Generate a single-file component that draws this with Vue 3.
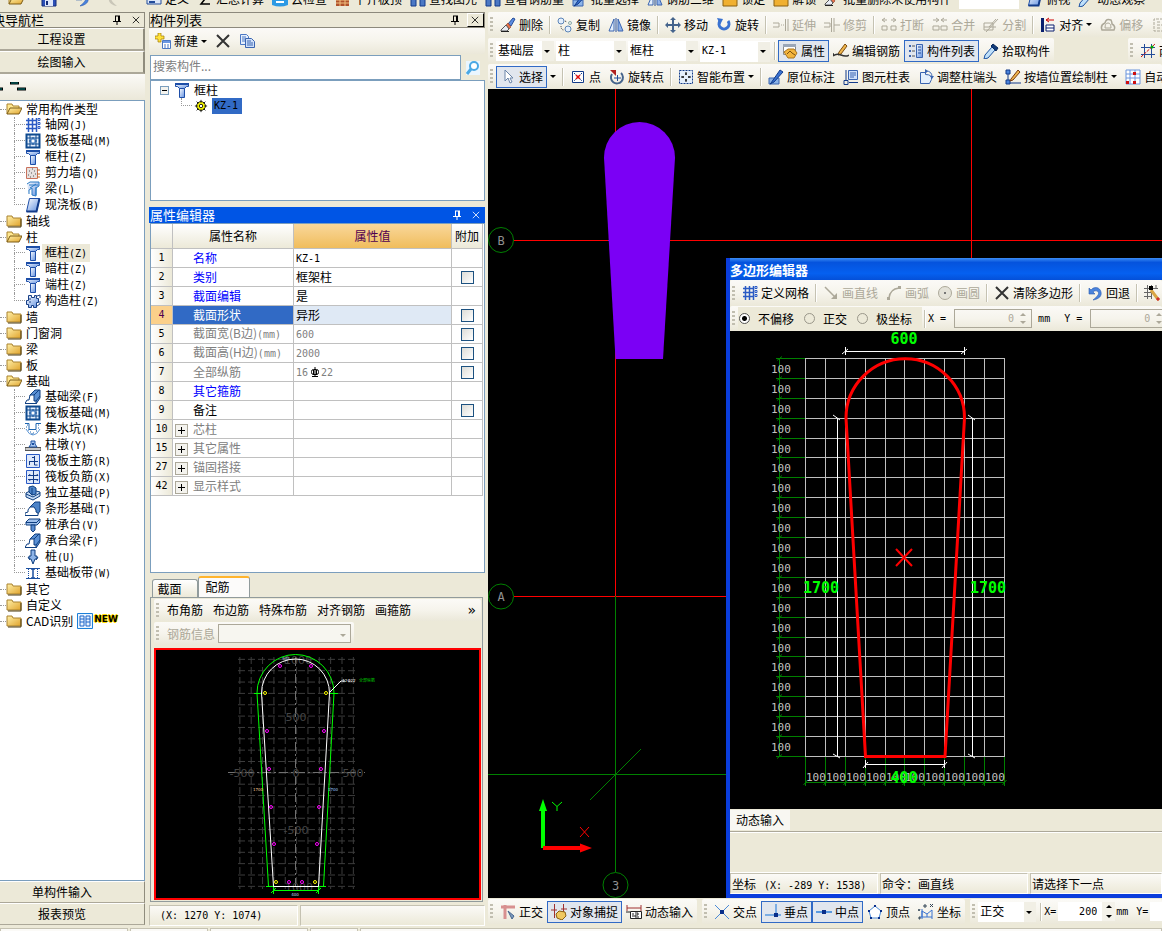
<template>
    <div class="app">
        <svg class="defs" aria-hidden="true">
            <defs>
                <linearGradient id="g-blue" x1="0" x2="1" y1="0" y2="1">
                    <stop offset="0" stop-color="#ffffff" />
                    <stop offset="1" stop-color="#5f8fe0" />
                </linearGradient>
                <linearGradient id="g-gold" x1="0" x2="1" y1="0" y2="1">
                    <stop offset="0" stop-color="#fff0a8" />
                    <stop offset="1" stop-color="#e0a32c" />
                </linearGradient>
            </defs>
        </svg>

        <div class="top-strip">
            <div class="top-file">
                <button v-for="i in fileTools" :key="i" class="tool" :aria-label="i">
                    <svg class="ic" viewBox="0 0 16 16" v-html="icons[i]"></svg>
                </button>
            </div>
            <div class="top-main">
                <button v-for="t in topTools" :key="t.text" class="tool">
                    <svg class="ic" viewBox="0 0 16 16" v-html="icons[t.icon]"></svg>
                    <span>{{ t.text }}</span>
                </button>
                <select class="top-select" aria-label="楼层"></select>
                <button v-for="t in viewTools" :key="t.text" class="tool">
                    <svg class="ic" viewBox="0 0 16 16" v-html="icons[t.icon]"></svg>
                    <span>{{ t.text }}</span>
                </button>
            </div>
        </div>

        <div class="body">
            <nav class="nav">
                <div class="pane-title nav-title">
                    <span class="cut">块导航栏</span>
                    <svg class="pin" viewBox="0 0 10 10"><path :d="pinPath" /></svg>
                    <svg class="close" viewBox="0 0 10 10"><path d="M1 1L9 9M9 1L1 9" /></svg>
                </div>
                <button class="nav-btn">工程设置</button>
                <button class="nav-btn">绘图输入</button>
                <div class="nav-tools">
                    <svg width="26" height="10" viewBox="0 0 26 10">
                        <path d="M0 7h3M10 1h9M17 7h9" stroke="#000" stroke-width="3" />
                        <path d="M0 7h2M11 1h7M18 7h7" stroke="#008080" stroke-width="1" />
                    </svg>
                </div>
                <ul class="tree">
                    <template v-for="group in tree" :key="group.text">
                        <li class="node">
                            <span class="stub"></span>
                            <svg class="ic" viewBox="0 0 16 16" v-html="group.items ? icons.open : icons.folder"></svg>
                            <span class="node-text">{{ group.text }}</span>
                            <template v-if="group.isNew">
                                <svg class="ic" viewBox="0 0 16 16" v-html="icons.cad"></svg>
                                <b class="new">NEW</b>
                            </template>
                        </li>
                        <li
                            v-for="(item, n) in group.items"
                            :key="item[0]"
                            class="node child"
                            :class="{ last: n === group.items.length - 1, active: group.active === n }"
                        >
                            <span class="branch"></span>
                            <svg class="ic" viewBox="0 0 16 16" v-html="icons[item[2]]"></svg>
                            <span class="node-text">{{ item[0] }}<span class="mono">({{ item[1] }})</span></span>
                        </li>
                    </template>
                </ul>
                <button class="nav-btn low">单构件输入</button>
                <button class="nav-btn low">报表预览</button>
            </nav>

            <section class="middle">
                <div class="pane-title">
                    <span>构件列表</span>
                    <svg class="pin" viewBox="0 0 10 10"><path :d="pinPath" /></svg>
                    <button class="close-btn" aria-label="关闭">
                        <svg class="close" viewBox="0 0 10 10"><path d="M1 1L9 9M9 1L1 9" /></svg>
                    </button>
                </div>
                <div class="bar list-bar">
                    <button class="tool">
                        <svg class="ic" viewBox="0 0 16 16" v-html="icons.add"></svg>
                        <span>新建</span><i class="caret"></i>
                    </button>
                    <button class="tool" aria-label="删除"><svg class="ic" viewBox="0 0 16 16" v-html="icons.cross"></svg></button>
                    <button class="tool" aria-label="复制"><svg class="ic" viewBox="0 0 16 16" v-html="icons.pages"></svg></button>
                </div>
                <div class="search">
                    <input v-model="keyword" type="text" placeholder="搜索构件..." aria-label="搜索构件" />
                    <button aria-label="搜索"><svg class="ic" viewBox="0 0 16 16" v-html="icons.search"></svg></button>
                </div>
                <div class="parts">
                    <div class="part">
                        <svg class="minus" viewBox="0 0 9 9">
                            <rect x="0.5" y="0.5" width="8" height="8" fill="#f4f3ee" stroke="#7b9ebd" />
                            <path d="M2 4.500h5" stroke="#000" />
                        </svg>
                        <svg class="ic" viewBox="0 0 16 16" v-html="icons.column"></svg>
                        <span>框柱</span>
                    </div>
                    <div class="part sub">
                        <span class="branch"></span>
                        <svg class="ic gear" viewBox="0 0 16 16" v-html="icons.gear"></svg>
                        <span class="picked mono">KZ-1</span>
                    </div>
                </div>

                <div class="pane-title blue">
                    <span>属性编辑器</span>
                    <svg class="pin" viewBox="0 0 10 10"><path :d="pinPath" /></svg>
                    <svg class="close" viewBox="0 0 10 10"><path d="M1 1L9 9M9 1L1 9" /></svg>
                </div>
                <div class="props">
                    <table>
                        <thead>
                            <tr>
                                <th class="c-no"></th>
                                <th class="c-name">属性名称</th>
                                <th class="c-value hot">属性值</th>
                                <th class="c-add">附加</th>
                            </tr>
                        </thead>
                        <tbody>
                            <tr v-for="row in rows" :key="row.no" :class="{ current: row.no === 4 }">
                                <th class="no">{{ row.no }}</th>
                                <td class="name" :class="row.tone">
                                    <span v-if="row.group" class="plus"></span>
                                    <span class="label">{{ row.name }}<span v-if="row.unit" class="mono">{{ row.unit }}</span></span>
                                </td>
                                <td class="value" :class="{ grey: row.tone === 'grey' }">
                                    <template v-if="row.no === 7">
                                        <span class="mono">16</span>
                                        <svg class="rebar" viewBox="0 0 10 10">
                                            <path d="M5 0v10M2 9.500h6M3.500 3v5M6.500 3v5" /><rect x="1.500" y="2.500" width="7" height="5" rx="2" />
                                        </svg>
                                        <span class="mono">22</span>
                                    </template>
                                    <span v-else :class="{ mono: /^[\w-]+$/.test(row.value) }">{{ row.value }}</span>
                                </td>
                                <td class="add"><input v-if="row.check" type="checkbox" :aria-label="row.name" /></td>
                            </tr>
                        </tbody>
                    </table>
                </div>

                <div class="tabs">
                    <button class="tab">截面</button>
                    <button class="tab on">配筋</button>
                </div>
                <div class="tab-panel">
                    <div class="bar rebar-bar">
                        <i class="grip"></i>
                        <button v-for="t in rebarTools" :key="t" class="text-tool">{{ t }}</button>
                        <span class="more">»</span>
                    </div>
                    <div class="bar rebar-info">
                        <i class="grip"></i>
                        <label for="rebar">钢筋信息</label>
                        <span class="combo off"><select id="rebar" disabled></select></span>
                    </div>
                    <div class="preview">
                        <svg width="323" height="247" viewBox="156 650 323 247">
                            <g class="dash">
                                <path v-for="n in 11" :key="'v' + n" :d="`M${228.500 + n * 11.350} 657V889`" />
                                <path v-for="n in 21" :key="'h' + n" :d="`M238 ${648 + n * 11.350}H355`" />
                            </g>
                            <path class="axis" d="M295.500 657V889M228 772.500H365" />
                            <g class="scale">
                                <text x="298" y="664">1000</text>
                                <text x="296" y="721">500</text>
                                <text x="242" y="777">-500</text>
                                <text x="296" y="777">0</text>
                                <text x="353" y="777">500</text>
                                <text x="296" y="834">-500</text>
                                <text x="299" y="891">1000</text>
                            </g>
                            <path
                                class="cover"
                                d="M257 693A38.500 38.500 0 0 1 334 693L323.500 886.500M257 693L268.500 886.500M273.500 890.500H318.500M254 693.500H261M329 693.500H338M266 886.500H276M316 886.500H326M273.500 884V894M318.500 884V894M271 893L276 888M316 893L321 888"
                            />
                            <path class="outline" d="M261.500 693A34 34 0 0 1 329.500 693L318.500 886.500H273.500ZM330 692L341 681H345" />
                            <circle v-for="(d, n) in dots" :key="n" :cx="d[0]" :cy="d[1]" r="1.500" fill="none" :stroke="d[2] ? '#ff0' : '#f0f'" />
                            <g class="tiny">
                                <text x="286" y="660" fill="#cde">942</text>
                                <text x="349" y="682" fill="#fff">12Φ22</text>
                                <text x="367" y="682" fill="#0c0">全部纵筋</text>
                                <text x="258" y="791" fill="#fc9">1700</text>
                                <text x="333" y="791" fill="#9cf">1700</text>
                                <text x="295" y="896" fill="#cde">400</text>
                            </g>
                        </svg>
                    </div>
                </div>
                <div class="status">
                    <span class="cell coord mono">(X: 1270 Y: 1074)</span>
                    <span class="cell rest"></span>
                </div>
            </section>

            <main class="work">
                <div class="bar">
                    <i class="grip"></i>
                    <template v-for="(t, n) in editTools" :key="n">
                        <i v-if="t.sep" class="sep"></i>
                        <button class="tool" :disabled="t.off">
                            <svg class="ic" viewBox="0 0 16 16" v-html="icons[t.icon]"></svg>
                            <span>{{ t.text }}</span><i v-if="t.menu" class="caret"></i>
                        </button>
                    </template>
                </div>

                <div class="split">
                    <div class="bar fit">
                        <i class="grip"></i>
                        <span v-for="c in combos" :key="c.label" class="combo" :class="c.size">
                            <select :aria-label="c.label"><option>{{ c.value }}</option></select>
                        </span>
                        <i class="sep"></i>
                        <button v-for="t in partTools" :key="t.text" class="tool" :class="{ pressed: t.on }">
                            <svg class="ic" viewBox="0 0 16 16" v-html="icons[t.icon]"></svg>
                            <span>{{ t.text }}</span>
                        </button>
                    </div>
                    <div class="bar fit tail">
                        <i class="grip"></i>
                        <button class="tool">
                            <svg class="ic" viewBox="0 0 16 16" v-html="icons.axis"></svg>
                            <span>两点</span>
                        </button>
                    </div>
                </div>

                <div class="bar">
                    <i class="grip"></i>
                    <template v-for="t in drawTools" :key="t.text">
                        <i v-if="t.sep" class="sep"></i>
                        <button class="tool" :class="{ pressed: t.on }">
                            <svg class="ic" viewBox="0 0 16 16" v-html="icons[t.icon]"></svg>
                            <span>{{ t.text }}</span><i v-if="t.menu && !t.on" class="caret"></i>
                        </button>
                        <button v-if="t.menu && t.on" class="drop" aria-label="更多"><i class="caret"></i></button>
                    </template>
                </div>

                <div class="canvas">
                    <svg class="plan" width="674" height="809" viewBox="488 89 674 809">
                        <path d="M615.500 89V596M971.500 89V260M514 240.500H2400M514 596.500H2400" stroke="#f00" />
                        <path d="M615.500 596V872M488 774.500H2400M590 800L641 749" stroke="#008000" />
                        <path d="M604 157.500A35.500 35.500 0 0 1 675 157.500L663 359H615.500Z" fill="#7b00f5" />
                        <path d="M608 240.500H670" stroke="#7b00f5" />
                        <g class="bubble">
                            <circle cx="501" cy="240" r="12.500" /><text x="501" y="245">B</text>
                            <circle cx="501" cy="596.500" r="12.500" /><text x="501" y="601">A</text>
                            <circle cx="615.500" cy="885" r="12.500" /><text x="615.500" y="890">3</text>
                        </g>
                        <path d="M541 848V811H539L543 799L547 811H545V848Z" fill="#0f0" />
                        <path d="M543 846H580V843.500L592 848L580 852.500V850H543Z" fill="#f00" />
                        <path d="M552 802L557 806.500L562 802M557 806.500V811" stroke="#0f0" fill="none" />
                        <path d="M580 827L589 837M589 827L580 837" stroke="#f00" />
                    </svg>

                    <section class="dialog" aria-label="多边形编辑器">
                        <h2>多边形编辑器</h2>
                        <div class="bar">
                            <i class="grip"></i>
                            <template v-for="(t, n) in polyTools" :key="n">
                                <i v-if="t.sep" class="sep"></i>
                                <button class="tool" :disabled="t.off">
                                    <svg class="ic" viewBox="0 0 16 16" v-html="icons[t.icon]"></svg>
                                    <span>{{ t.text }}</span>
                                </button>
                            </template>
                        </div>
                        <div class="bar offset-bar">
                            <i class="grip"></i>
                            <div class="radios">
                                <label v-for="o in offsets" :key="o">
                                    <input v-model="offset" type="radio" name="offset" :value="o" />{{ o }}
                                </label>
                            </div>
                            <i class="sep"></i>
                            <label class="mono" for="dx">X =</label>
                            <span class="num"><input id="dx" type="text" value="0" disabled /><i class="spin"></i></span>
                            <span class="mono unit">mm</span>
                            <label class="mono" for="dy">Y =</label>
                            <span class="num"><input id="dy" type="text" value="0" disabled /><i class="spin"></i></span>
                        </div>
                        <div class="poly">
                            <svg width="432" height="478" viewBox="730 331 432 478">
                                <g stroke="#008000">
                                    <path d="M779.500 358V757" />
                                    <path d="M805 782.500H1005" />
                                    <path v-for="n in 21" :key="n" :d="`M776 ${snap(338.500 + n * 19.900)}H805M777 ${snap(340.500 + n * 19.900)}l5 -4`" />
                                    <path v-for="n in 11" :key="'b' + n" :d="`M${snap(785.500 + n * 19.900)} 757V786m-2 -1l4 -5`" />
                                </g>
                                <g stroke="#c0c0c0">
                                    <path v-for="n in 11" :key="'v' + n" :d="`M${snap(785.500 + n * 19.900)} 358V757`" />
                                    <path v-for="n in 21" :key="'h' + n" :d="`M805 ${snap(338.500 + n * 19.900)}H1005`" />
                                </g>
                                <g class="steps">
                                    <text v-for="n in 20" :key="n" x="771" :y="Math.round(353 + n * 19.900)">100</text>
                                    <text v-for="n in 10" :key="'b' + n" :x="Math.round(786 + n * 19.900)" y="781">100</text>
                                </g>
                                <g stroke="#fff">
                                    <path d="M845.500 351.500H964.500M845.500 347V355M964.500 347V355M842 354l6 -5M961 354l6 -5" />
                                    <path d="M865.500 764.500H944.500M865.500 760V768M944.500 760V768M863 768l5 -6M942 768l5 -6" />
                                    <path d="M837.500 418V756M833 415l7 5M833 754l7 4" />
                                    <path d="M972.500 418V756M968 415l7 5M968 754l7 4" />
                                </g>
                                <path class="shape" d="M846 418A59.250 59.250 0 0 1 964.500 418L945 756.500H865.500Z" />
                                <path d="M896 549L912 566M912 549L896 566" stroke="#f00" stroke-width="2" />
                                <g class="dims">
                                    <text x="904" y="344">600</text>
                                    <text x="821" y="593">1700</text>
                                    <text x="988" y="593">1700</text>
                                    <text x="904" y="783">400</text>
                                </g>
                            </svg>
                        </div>
                        <div class="dyn"><button class="text-tool">动态输入</button></div>
                        <div class="blank"></div>
                        <div class="dialog-status">
                            <span class="cell">坐标<span class="mono pos">(X: -289 Y: 1538)</span></span>
                            <span class="cell">命令：画直线</span>
                            <span class="cell">请选择下一点</span>
                        </div>
                    </section>
                </div>

                <div class="split snap-row">
                    <div class="bar fit">
                        <i class="grip"></i>
                        <button v-for="t in inputTools" :key="t.text" class="tool" :class="{ pressed: t.on }">
                            <svg class="ic" viewBox="0 0 16 16" v-html="icons[t.icon]"></svg>
                            <span>{{ t.text }}</span>
                        </button>
                    </div>
                    <div class="bar fit">
                        <i class="grip"></i>
                        <button v-for="t in snapTools" :key="t.text" class="tool" :class="{ pressed: t.on }">
                            <svg class="ic" viewBox="0 0 16 16" v-html="icons[t.icon]"></svg>
                            <span>{{ t.text }}</span>
                        </button>
                    </div>
                    <div class="bar grow">
                        <i class="grip"></i>
                        <span class="combo small"><select aria-label="偏移方式"><option>正交</option></select></span>
                        <i class="sep"></i>
                        <label class="mono" for="ox">X=</label>
                        <span class="num plain"><input id="ox" type="text" value="200" /><i class="spin"></i></span>
                        <span class="mono">mm</span>
                        <label class="mono oy" for="oy">Y=</label>
                        <span class="num plain"><input id="oy" type="text" value="" /><i class="spin"></i></span>
                    </div>
                </div>
            </main>
        </div>
        <div class="bottom-strip"><span></span><span></span><span></span><span></span><span></span></div>
    </div>
</template>

<script setup>
import { ref } from 'vue';

const keyword = ref('');
const offset = ref('不偏移');
const offsets = ['不偏移', '正交', '极坐标'];

const pinPath = 'M3 1H8M3.500 1V6M6.500 1V6M7.500 1V6M1 6.500H9M5 7V10';

const snap = v => Math.floor(v) + 0.5;

// glyphs on a 16 x 16 grid
const icons = {
    folder: '<path d="M1 3h5l1 2h8v8H1z" fill="url(#g-gold)" stroke="#a9822f"/><path d="M15 6v8H2" stroke="#4a3a10" fill="none"/>',
    open: '<path d="M1 13V3h5l1 2h6v2" fill="#ffe890" stroke="#a9822f"/><path d="M1 13L4 7h12l-3 6z" fill="url(#g-gold)" stroke="#7c5c17"/>',
    save: '<path d="M1 1h14v14H1z" fill="#2c50b8" stroke="#142c78"/><path d="M4 9h8v6H4z" fill="#dde6fa"/><path d="M5 10h2v4H5z" fill="#142c78"/>',
    undo: '<path d="M2 3v6h6L6 7c3-3 7 0 5 3-1 2-3 3-5 5 6-1 9-4 8-8-1-5-7-6-10-2z" fill="#4a83dc" stroke="#2a5ab0" stroke-width=".6"/>',
    redo: '<path d="M14 3v6H8l2-2C7 4 3 7 5 10c1 2 3 3 5 5-6-1-9-4-8-8 1-5 7-6 10-2z" fill="#c9c6b8"/>',
    grid: '<path d="M1 3.500h11M1 7.500h11M1 11.500h11M3.500 1v14M7.500 1v14M11.500 1v14" stroke="#2a5ac4" stroke-width="1.500"/><path d="M13 1.500h2v2h-2zM13 5.500h2v2h-2zM13 9.500h2v2h-2z" fill="#fff" stroke="#2a5ac4"/>',
    raft: '<path d="M1.500 1.500h13v13h-13z" fill="#e4eefc" stroke="#0f4a8f" stroke-width="2"/><path d="M1 5h14M1 11h14M5 1v14M11 1v14M4 8h8M8 4v8" stroke="#0f4a8f"/><path d="M6 6h4v4H6z" fill="#fff" stroke="#2c6cb8"/>',
    column: '<path d="M1.500 1.500h13v3h-2l-2 2h-5l-2-2h-2z" fill="url(#g-blue)" stroke="#1d4ea8"/><path d="M1 2h14" stroke="#1d4ea8" stroke-width="2"/><path d="M5.500 6.500h5v9h-5z" fill="url(#g-blue)" stroke="#1d4ea8"/>',
    wall: '<path d="M1.500 2.500h11v11h-11z" fill="#e6e0de" stroke="#c9715c"/><path d="M3 10h1M5 12h1M6 8h1M8 11h1M9 6h1M4 6h1M10 9h1M7 4h1" stroke="#555"/><path d="M12 5h3M12 9h3M12 12h3" stroke="#c96a20"/>',
    beam: '<path d="M2 3l3-2h9v4l-3 2v8l-4-1V7L4 9v4" fill="url(#g-blue)" stroke="#2a7ac4"/><path d="M4 4h9M11 6v8M5 7l6-4" stroke="#2a7ac4"/>',
    slab: '<path d="M4.500 1.500h10l-3 13h-10z" fill="url(#g-blue)" stroke="#1d4ea8"/><path d="M1.500 14.500h10l3-13" stroke="#123b8a" stroke-width="2" fill="none"/>',
    tie: '<path d="M3.500 2.500h3v2h3v-2h2v3h2v4h-2v5h-3v-2h-2v2h-3v-3h-2v-4h2z" fill="url(#g-blue)" stroke="#173f86"/><path d="M4 6h2M4 9h2M12 3l3-1v3M12 13l3-2V8" stroke="#173f86" fill="none"/>',
    fbeam: '<path d="M5 6l5-5h5v8l-4 6z" fill="#5a90d4" stroke="#0f3f80"/><path d="M0 14.500L2 11h2l1-5h4v6h2v2.500z" fill="#fff" stroke="#0f3f80"/><path d="M9 6l5-5M11 12l4-5" stroke="#0f3f80"/>',
    pit: '<path d="M0 2.500h4v6h7v-6h5" fill="none" stroke="#1c64b0"/><path d="M1 6h1M3 9h1M5 11h1M8 12h1M11 10h1M13 7h1M6 13h2M2 4h1M13 4h1" stroke="#1c64b0"/><path d="M1 8q3 6 7 6t7-6" fill="none" stroke="#5a94d4"/>',
    pier: '<path d="M0 10.500h16v3H0z" fill="#c8c8c8" stroke="#555"/><path d="M4 10l2-3V4h4v3l2 3z" fill="#a9c8f2" stroke="#1c50a0"/><path d="M7 6h2v2H7z" fill="#1c50a0"/>',
    main: '<path d="M1.500 1.500h13v13h-13z" fill="#dfe9fa" stroke="#2a5ac4"/><path d="M9.500 3v9h3M4 8.500h9M4.500 8v4M7 4.500h3" stroke="#123b8a" fill="none"/>',
    neg: '<path d="M1.500 1.500h13v13h-13z" fill="#dfe9fa" stroke="#2a5ac4"/><path d="M8.500 1v14M3 6.500h10M3 10.500h10M5 5l-1 2M12 5l1 2M5 12l-1-2M12 12l1-2" stroke="#123b8a"/>',
    iso: '<path d="M1 8l6-3 8 2v4l-7 4-7-3z" fill="#c8dcf4" stroke="#0f3f80"/><path d="M4 7V2l4-1 3 2v6l-4 1z" fill="#4d84c8" stroke="#0f3f80"/><path d="M7 3v7M1 9l7 3 7-4" stroke="#0f3f80" fill="none"/>',
    strip: '<path d="M5 6l5-5h5v9l-3 4z" fill="#4d84c8" stroke="#0f3f80"/><path d="M0 14.500V12l3-1V9l2-3h4l2 3v2l2 1v2.500z" fill="#fff" stroke="#0f3f80"/>',
    cap: '<path d="M1 5l3-3h11v3l-3 3H1z" fill="#9fc0ec" stroke="#0f3f80"/><path d="M1 5.500h11M12 5l3-3" stroke="#0f3f80"/><path d="M6 8h4v5l-2 2-2-2z" fill="#5a8cd0" stroke="#0f3f80"/>',
    pile: '<path d="M6 1h4v6h2v3h-2l-2 5-2-5H4V7h2z" fill="#8db4e8" stroke="#0f3f80"/><path d="M3 8l2 3M13 8l-2 3" stroke="#0f3f80"/>',
    band: '<path d="M1 3.500h14M1 13.500h14" stroke="#1c50a0"/><path d="M8 4v9M6 4h4M6 13h4" stroke="#1c50a0" stroke-width="1.500"/><path d="M3.500 4v9M12.500 4v9" stroke="#1c50a0" stroke-dasharray="1 1"/>',
    cad: '<path d="M.5.500h15v15H.500z" fill="#eaf4ff" stroke="#1c80d8"/><path d="M3 3h4v10H3zM9 3h4v10H9zM3 6h4M3 9h4M9 6h4M9 9h4" fill="none" stroke="#1c64c8"/>',
    add: '<path d="M3 0h3v3h3v3H6v3H3V6H0V3h3z" fill="#ffe23c" stroke="#a07800" stroke-width=".7"/><path d="M7.500 7.500h8v8h-8z" fill="#fff" stroke="#4b78c4"/><path d="M8 8h7v2H8z" fill="#6b98e4"/><path d="M9 12h2M12 12h2M9 14h2M12 14h2" stroke="#4b78c4"/>',
    cross: '<path d="M2 2l12 12M14 2L2 14" stroke="#333" stroke-width="2"/>',
    pages: '<path d="M1.500 1.500h6l2 2v8h-8z" fill="#e6effc" stroke="#4b78c4"/><path d="M3 4h4M3 6h4M3 8h4" stroke="#4b78c4"/><path d="M6.500 5.500h6l3 3v6h-9z" fill="#cfe0fa" stroke="#3a64b0"/><path d="M8 8h4M8 10h6M8 12h6" stroke="#3a64b0"/>',
    search: '<path d="M1 1h14v14H1z" fill="#eaf6ff"/><circle cx="9" cy="6" r="4" fill="#fff" stroke="#4aa8e4" stroke-width="2"/><path d="M6 9l-4 5" stroke="#4aa8e4" stroke-width="3"/>',
    gear: '<circle cx="8" cy="8" r="5" fill="#ff0" stroke="#000"/><path d="M8 1v3M8 12v3M1 8h3M12 8h3M3 3l2 2M11 11l2 2M13 3l-2 2M5 11l-2 2" stroke="#000"/><circle cx="8" cy="8" r="2" fill="#fff" stroke="#000"/>',
    erase: '<path d="M8 7l5-6 2 1-4 7z" fill="#5c8ce0" stroke="#234c9a"/><path d="M6 8l2-2 3 4-2 2z" fill="#e9704a" stroke="#8a3c20" stroke-width=".6"/><path d="M1 13l5-5 3 4-2 2H1z" fill="#e8ecf4" stroke="#555"/><path d="M1 14.500h8" stroke="#222"/>',
    copy: '<circle cx="4" cy="4" r="3" fill="#e4effc" stroke="#5b84b8"/><circle cx="11" cy="12" r="3" fill="#e4effc" stroke="#5b84b8"/><circle cx="13" cy="6" r="1.500" fill="none" stroke="#8aa"/><path d="M4 9q0 4 3 4M8 4l2 1" stroke="#333" fill="none" stroke-dasharray="1 1"/>',
    mirror: '<path d="M6 2v12H1z" fill="#e4effc" stroke="#3a64b0"/><path d="M10 2v12h5z" fill="#8fb2ea" stroke="#3a64b0"/><path d="M8 1v14" stroke="#234c9a"/>',
    move: '<path d="M8 2v12M2 8h12" stroke="#45648c" stroke-width="2"/><path d="M8 0l3 3H5zM8 16l3-3H5zM0 8l3-3v6zM16 8l-3-3v6z" fill="#45648c"/>',
    rotate: '<path d="M4 4a5 5 0 1 0 8 0" fill="none" stroke="#3a72d0" stroke-width="3"/><path d="M1 1l6 1-3 6z" fill="#3a72d0"/>',
    extend: '<path d="M0 6h6v4H0M8 8h1M10 8h1M12.500 2v12M15 2v12" stroke="currentColor" fill="none"/>',
    trim: '<path d="M0 6h6v4H0M7.500 1v14M10 1v14M10 8h6" stroke="currentColor" fill="none"/>',
    brk: '<path d="M2 3h4M10 3h4M4 1L1 3l3 2M12 1l3 2-3 2M1 9h5v4H1zM10 9h5v4h-5z" stroke="currentColor" fill="none"/>',
    merge: '<path d="M1 3h5M10 3h5M4 1l3 2-3 2M12 1L9 3l3 2M1 9h6v4H1zM9 9h6v4H9z" stroke="currentColor" fill="none"/>',
    divide: '<path d="M1 6h9v7H1zM3 15L15 2M6 10l7-8M1 10h12" stroke="currentColor" fill="none"/>',
    align: '<path d="M2.500 1v14" stroke="#0a1f6e" stroke-width="3"/><path d="M6 8h8v6H6zM6 11h8" fill="#fff" stroke="#0a1f6e"/><path d="M14 3H7M9 1L6 3l3 2" stroke="#c00" fill="none"/>',
    offset: '<path d="M2 13q-2-5 3-7 1-5 6-3 1 2 1 4 4 2 2 6z" fill="none" stroke="currentColor" stroke-width="1.500"/><path d="M5 11q0-5 3-5t3 5z" fill="none" stroke="currentColor"/>',
    stretch: '<path d="M12 2H3v12h9M6 5h3M6 8h9M12 6l3 2-3 2M6 11h3" stroke="currentColor" fill="none" stroke-dasharray="3 1"/>',
    props: '<path d="M1.500 1.500h12v10h-12z" fill="#fff" stroke="#8a8a8a"/><path d="M1 1h13v3H1z" fill="#9aa6b8"/><path d="M2 9l4-3h6l3 4-3 5H6z" fill="#f4b53c" stroke="#a87420"/><path d="M5 11l3-3 2 2 3 2" stroke="#7c5010" fill="none"/>',
    pencil: '<path d="M6 9l6-8 2 2-6 8-3 1z" fill="#f0b64c" stroke="#7c4c10"/><path d="M0 13q3-3 8-1t8 0M0 10v3" fill="none" stroke="#333" stroke-width="1.500"/>',
    list: '<path d="M1 3h2M1 8h2M1 13h2" stroke="#3a64b0" stroke-width="2"/><path d="M4 3h3M4 8h3M4 13h3" stroke="#555"/><path d="M8.500 1.500h6v13h-6z" fill="url(#g-blue)" stroke="#3a64b0"/><path d="M10 4h3M10 7h3M10 10h3" stroke="#234c9a"/>',
    pick: '<path d="M9 4l3 3-7 8-4 1 1-4z" fill="#bfe0fa" stroke="#1c50a0"/><path d="M8 3l2-2 5 4-2 3z" fill="#123b7a" stroke="#0a2a5a"/>',
    axis: '<path d="M1 4.500h14M1 11.500h14M4.500 1v14M11.500 1v14" stroke="#234c9a"/><path d="M1 14L15 1" stroke="#d01010" stroke-dasharray="3 1"/><circle cx="12" cy="4" r="1.500" fill="#0a0"/>',
    select: '<path d="M5 1v11l3-3 2 5 2-1-2-4h3z" fill="#fff" stroke="#6a84a8"/>',
    point: '<path d="M2.500 2.500h11v11h-11z" fill="#fff" stroke="#123b8a"/><path d="M4 4l8 8M12 4l-8 8" stroke="#123b8a" stroke-dasharray="2 1"/><path d="M6 6l4 4M10 6l-4 4" stroke="#e01010" stroke-width="1.500"/>',
    rpoint: '<path d="M3 5a6 6 0 1 0 9-1" fill="none" stroke="#45648c" stroke-width="2"/><path d="M1 1h6v6z" fill="#b02020"/><path d="M5 9h7M8.500 6v6" stroke="#234c9a"/>',
    smart: '<path d="M1.500 1.500h13v13h-13z" fill="#e4effc" stroke="#123b8a" stroke-dasharray="2 1"/><path d="M8 3v3M8 10v3M3 8h3M10 8h3M7 5h2M7 11h2M5 7v2M11 7v2" stroke="#000"/>',
    note: '<path d="M1 9h10v6H1z" fill="#8cb4e8" stroke="#3a64b0"/><path d="M3 14L12 1l3 2L6 13l-4 2z" fill="#3a72d0" stroke="#123b8a"/>',
    ctable: '<path d="M3 1v11M1 11.500h4v4H1zM6 13.500h9" stroke="#123b8a" fill="none"/><path d="M5.500 1.500h9v9h-9z" fill="#cfe0fa" stroke="#3a64b0"/><path d="M7 4h6M7 6h6M7 8h4" stroke="#3a64b0"/>',
    turn: '<path d="M2.500 3.500h5v2q7 0 6 5l-2 4h-9z" fill="#e4effc" stroke="#3a64b0"/><path d="M8 2q6 0 6 6" fill="none" stroke="#3a64b0"/><path d="M7 0l3 2-3 3zM12 7h4l-2 3z" fill="#3a64b0"/>',
    wdraw: '<path d="M3 1v14M1 14h15" stroke="#123b8a"/><path d="M1 1h4v4H1zM1 11h4v4H1z" fill="#4b84dc" stroke="#123b8a"/><path d="M6 10l7-9 2 2-7 8-3 1z" fill="#f0b64c" stroke="#7c3c10"/>',
    auto: '<path d="M1 1h14v14H1zM1 5h14M1 9h14M5 1v14M10 1v14" fill="#fff" stroke="#6a94dc"/><path d="M8 3h3v3H8zM1 12h3v3H1zM8 12h3v3H8z" fill="#d01010"/>',
    line: '<path d="M2 2l11 11" stroke="currentColor" stroke-width="1.500"/><path d="M14 8v6H8z" fill="currentColor"/>',
    arc: '<path d="M3 13Q4 4 13 3" fill="none" stroke="currentColor" stroke-width="1.500"/><path d="M1 12h3v3H1zM12 1h3v3h-3z" fill="currentColor"/>',
    circle: '<circle cx="8" cy="8" r="6.500" fill="#e4e2d8" stroke="currentColor"/><path d="M7 8h2" stroke="#777" stroke-width="2"/>',
    gridpen: '<path d="M0 3.500h14M0 7.500h8M0 11.500h8M3.500 0v14M7.500 0v14M12 0v4" stroke="#666"/><path d="M7 5l6 8 2 2" stroke="#d9a544" stroke-width="3"/><path d="M5 1h4v4H5z" fill="#000"/><path d="M13 13l2 2" stroke="#d03030" stroke-width="3"/>',
    ortho: '<path d="M1 3h14M5 1v14" stroke="#d89090" stroke-width="3"/><path d="M8 7l6 5-2 3z" fill="#7f9cc0" stroke="#45648c"/>',
    osnap: '<path d="M3.500 0v14M12.500 0v8M0 6h6M10 5h6" stroke="#a03030"/><path d="M5 10l3-3 6 1 1 4-4 4-5-2z" fill="#f0c860" stroke="#8a6010"/>',
    dyn: '<path d="M1 1v6M15 1v6M1 4h14" stroke="#a03030"/><path d="M4.500 7.500h11v7h-11z" fill="#fff" stroke="#222"/><path d="M7 9v4M9 9h3v2H9v2h4" stroke="#222" fill="none"/><path d="M0 8h4" stroke="#222"/>',
    inter: '<path d="M1 1l14 14M15 1L1 15" stroke="#4a8ad8"/><path d="M6 6h4v4H6z" fill="#0a2f8a"/>',
    perp: '<path d="M0 11h16M11 0v12" stroke="#5a9ae0" stroke-width="1.500"/><path d="M9 9h4v4H9z" fill="#0a2f8a"/>',
    mid: '<path d="M0 8h16" stroke="#5a9ae0" stroke-width="2"/><path d="M6 6h4v4H6z" fill="#0a2f8a"/>',
    vertex: '<path d="M8 2l6 5-2 7H4L2 7z" fill="#fff" stroke="#4a8ad8"/><path d="M7 1h2v2H7zM13 6h2v2h-2zM11 13h2v2h-2zM3 13h2v2H3zM1 6h2v2H1z" fill="#0a2f8a"/>',
    coord: '<path d="M4 5v10M2 13h12M4 13V7l5 3 5-4v9M9 10v3" stroke="#3a72d0" fill="none"/><path d="M6 1h2v2H6zM1 13h1v2H1zM12 0l3 3M15 0l-3 3M0 5l1 2 1-2" stroke="#345" fill="none"/>',
    sheet: '<path d="M1 3h14v10H1z" fill="#dbe6f8" stroke="#234c9a"/><path d="M3 11h6" stroke="#234c9a" stroke-width="2"/>',
    sum: '<path d="M12 3H4l4 5-4 5h9" fill="none" stroke="#000" stroke-width="1.500"/>',
    cloud: '<path d="M0 2h16v12q-8 3-16 0z" fill="#2c9ae4"/><path d="M4 11h8" stroke="#fff" stroke-width="2"/>',
    level: '<path d="M1 6h13v9H1z" fill="#b0522c"/><path d="M1 9h13M1 12h13M5 6v9M10 6v9" stroke="#f0c080"/>',
    find: '<path d="M1 3h5v12H1zM10 3h5v12h-5zM6 7h4" fill="#4b78c4" stroke="#123b8a"/>',
    lock: '<path d="M4 8V4q4-4 8 0v4" fill="none" stroke="#777" stroke-width="2"/><path d="M1 7h14v8H1z" fill="#f0b030" stroke="#8a6010"/>'
};

const fileTools = ['open', 'save', 'undo', 'redo'];
const topTools = [
    { icon: 'sheet', text: '定义' },
    { icon: 'sum', text: '汇总计算' },
    { icon: 'cloud', text: '云检查' },
    { icon: 'level', text: '平齐板顶' },
    { icon: 'find', text: '查找图元' },
    { icon: 'find', text: '查看钢筋量' },
    { icon: 'note', text: '批量选择' },
    { icon: 'mirror', text: '钢筋三维' },
    { icon: 'lock', text: '锁定' },
    { icon: 'lock', text: '解锁' },
    { icon: 'erase', text: '批量删除未使用构件' }
];
const viewTools = [
    { icon: 'slab', text: '俯视' },
    { icon: 'pick', text: '动态观察' }
];

const tree = [
    {
        text: '常用构件类型',
        items: [
            ['轴网', 'J', 'grid'],
            ['筏板基础', 'M', 'raft'],
            ['框柱', 'Z', 'column'],
            ['剪力墙', 'Q', 'wall'],
            ['梁', 'L', 'beam'],
            ['现浇板', 'B', 'slab']
        ]
    },
    { text: '轴线' },
    {
        text: '柱',
        active: 0,
        items: [
            ['框柱', 'Z', 'column'],
            ['暗柱', 'Z', 'column'],
            ['端柱', 'Z', 'column'],
            ['构造柱', 'Z', 'tie']
        ]
    },
    { text: '墙' },
    { text: '门窗洞' },
    { text: '梁' },
    { text: '板' },
    {
        text: '基础',
        items: [
            ['基础梁', 'F', 'fbeam'],
            ['筏板基础', 'M', 'raft'],
            ['集水坑', 'K', 'pit'],
            ['柱墩', 'Y', 'pier'],
            ['筏板主筋', 'R', 'main'],
            ['筏板负筋', 'X', 'neg'],
            ['独立基础', 'P', 'iso'],
            ['条形基础', 'T', 'strip'],
            ['桩承台', 'V', 'cap'],
            ['承台梁', 'F', 'fbeam'],
            ['桩', 'U', 'pile'],
            ['基础板带', 'W', 'band']
        ]
    },
    { text: '其它' },
    { text: '自定义' },
    { text: 'CAD识别', isNew: true }
];

const rows = [
    { no: 1, name: '名称', value: 'KZ-1', tone: 'link' },
    { no: 2, name: '类别', value: '框架柱', tone: 'link', check: true },
    { no: 3, name: '截面编辑', value: '是', tone: 'link' },
    { no: 4, name: '截面形状', value: '异形', tone: 'link', check: true },
    { no: 5, name: '截面宽(B边)', unit: '(mm)', value: '600', tone: 'grey', check: true },
    { no: 6, name: '截面高(H边)', unit: '(mm)', value: '2000', tone: 'grey', check: true },
    { no: 7, name: '全部纵筋', value: '', tone: 'grey', check: true },
    { no: 8, name: '其它箍筋', value: '', tone: 'link' },
    { no: 9, name: '备注', value: '', tone: '', check: true },
    { no: 10, name: '芯柱', value: '', tone: 'grey', group: true },
    { no: 15, name: '其它属性', value: '', tone: 'grey', group: true },
    { no: 27, name: '锚固搭接', value: '', tone: 'grey', group: true },
    { no: 42, name: '显示样式', value: '', tone: 'grey', group: true }
];

const rebarTools = ['布角筋', '布边筋', '特殊布筋', '对齐钢筋', '画箍筋'];

// x, y, corner bar
const dots = [
    [280, 666], [311, 666], [267, 731], [324, 731],
    [269, 769], [321, 769], [271, 807], [319, 807],
    [274, 844], [317, 844], [289, 882], [302, 882],
    [265, 693, true], [326, 693, true], [276, 882, true], [315, 882, true]
];

const editTools = [
    { icon: 'erase', text: '删除' },
    { icon: 'copy', text: '复制', sep: true },
    { icon: 'mirror', text: '镜像' },
    { icon: 'move', text: '移动', sep: true },
    { icon: 'rotate', text: '旋转' },
    { icon: 'extend', text: '延伸', sep: true, off: true },
    { icon: 'trim', text: '修剪', off: true },
    { icon: 'brk', text: '打断', sep: true, off: true },
    { icon: 'merge', text: '合并', off: true },
    { icon: 'divide', text: '分割', off: true },
    { icon: 'align', text: '对齐', sep: true, menu: true },
    { icon: 'offset', text: '偏移', off: true },
    { icon: 'stretch', text: '', off: true }
];

const combos = [
    { label: '楼层', value: '基础层', size: 'small' },
    { label: '类型', value: '柱' },
    { label: '构件类型', value: '框柱' },
    { label: '构件', value: 'KZ-1', size: 'latin' }
];

const partTools = [
    { icon: 'props', text: '属性', on: true },
    { icon: 'pencil', text: '编辑钢筋' },
    { icon: 'list', text: '构件列表', on: true },
    { icon: 'pick', text: '拾取构件' }
];

const drawTools = [
    { icon: 'select', text: '选择', on: true, menu: true },
    { icon: 'point', text: '点', sep: true },
    { icon: 'rpoint', text: '旋转点' },
    { icon: 'smart', text: '智能布置', sep: true, menu: true },
    { icon: 'note', text: '原位标注', sep: true },
    { icon: 'ctable', text: '图元柱表' },
    { icon: 'turn', text: '调整柱端头' },
    { icon: 'wdraw', text: '按墙位置绘制柱', menu: true },
    { icon: 'auto', text: '自动' }
];

const polyTools = [
    { icon: 'grid', text: '定义网格' },
    { icon: 'line', text: '画直线', sep: true, off: true },
    { icon: 'arc', text: '画弧', off: true },
    { icon: 'circle', text: '画圆', off: true },
    { icon: 'cross', text: '清除多边形', sep: true },
    { icon: 'undo', text: '回退', sep: true },
    { icon: 'gridpen', text: '', sep: true }
];

const inputTools = [
    { icon: 'ortho', text: '正交' },
    { icon: 'osnap', text: '对象捕捉', on: true },
    { icon: 'dyn', text: '动态输入' }
];

const snapTools = [
    { icon: 'inter', text: '交点' },
    { icon: 'perp', text: '垂点', on: true },
    { icon: 'mid', text: '中点', on: true },
    { icon: 'vertex', text: '顶点' },
    { icon: 'coord', text: '坐标' }
];
</script>

<style>
body {
    margin: 0;
    background: #ece9d8;
}
</style>

<style scoped>
.app {
    display: flex;
    flex-direction: column;
    min-height: 100vh;
    overflow: hidden;
    background: #ece9d8;
    color: #000;
    font-family: "Noto Sans CJK SC", sans-serif;
    font-size: 12px;
    line-height: 16px;
    white-space: nowrap;
}

.app *,
.app *::before,
.app *::after {
    box-sizing: border-box;
}

.defs {
    position: absolute;
    width: 0;
    height: 0;
}

button,
input,
select {
    margin: 0;
    padding: 0;
    border: none;
    border-radius: 0;
    background: transparent;
    color: inherit;
    font: inherit;
}

.mono {
    font-family: "DejaVu Sans Mono", "Noto Sans CJK SC", monospace;
    font-size: 10px;
}

.ic {
    width: 16px;
    height: 16px;
    flex: none;
    fill: none;
}

/* toolbars */
.bar {
    display: flex;
    align-items: center;
    height: 25px;
    overflow: hidden;
    border-radius: 2px;
    background: linear-gradient(#fbfaf7, #f6f4ec 50%, #ebe8d9);
}

.tool {
    display: flex;
    align-items: center;
    gap: 3px;
    height: 22px;
    padding: 0 4px;
    flex: none;
}

.tool:disabled {
    color: #aca899;
}

.pressed {
    border: 1px solid #316ac5;
    padding: 0 3px;
    background: #e1e6ee;
}

.grip {
    width: 3px;
    height: 15px;
    margin: 0 3px 0 2px;
    flex: none;
    background: repeating-linear-gradient(#c1beb0 0 2px, transparent 2px 4px);
}

.sep {
    width: 2px;
    height: 18px;
    margin: 0 2px;
    flex: none;
    border-left: 1px solid #c5c2b2;
    border-right: 1px solid #fff;
}

.caret {
    width: 5px;
    flex: none;
    border: 3px solid transparent;
    border-width: 3px 3px 0;
    border-top-color: #000;
}

.drop {
    display: flex;
    align-items: center;
    height: 22px;
    padding: 0 4px 0 3px;
}

.text-tool {
    padding: 0 5px;
}

.combo {
    position: relative;
    width: 70px;
    height: 20px;
    margin-right: 2px;
    flex: none;
    background: #fff;
}

.combo::after {
    content: "";
    position: absolute;
    top: 9px;
    right: 4px;
    border: 3px solid transparent;
    border-width: 3px 3px 0;
    border-top-color: #000;
    pointer-events: none;
}

.combo select {
    width: 100%;
    height: 100%;
    padding: 0 12px 2px 2px;
    appearance: none;
    background: linear-gradient(to right, #fff calc(100% - 12px), #f1efe5 0);
}

.combo.small {
    width: 58px;
}

.combo.latin select {
    font-family: "DejaVu Sans Mono", monospace;
    font-size: 10px;
}

/* top strip shows only the lower edge of its buttons */
.top-strip {
    display: flex;
    align-items: flex-end;
    height: 12px;
    padding-bottom: 2px;
    overflow: hidden;
}

.top-file,
.top-main {
    display: flex;
    align-items: center;
    flex: none;
}

.top-file {
    width: 142px;
    gap: 9px;
    padding-left: 4px;
}

.top-select {
    width: 60px;
    height: 20px;
    margin: 0 4px;
    appearance: none;
    background: #fff;
}

.body {
    display: flex;
    flex: 1;
    gap: 2px;
}

/* left navigation */
.nav {
    display: flex;
    flex-direction: column;
    width: 145px;
    margin-right: 2px;
    padding-bottom: 2px;
    flex: none;
}

.pane-title {
    display: flex;
    align-items: center;
    gap: 7px;
    height: 16px;
    flex: none;
    border: 1px solid #8c897c;
    line-height: 14px;
}

.pane-title > span {
    flex: 1;
    font-size: 13px;
}

.nav-title {
    border-left: none;
    overflow: hidden;
}

.cut {
    margin-left: -8px;
}

.pin,
.close {
    width: 10px;
    height: 10px;
    fill: none;
    stroke: currentColor;
}

.close {
    width: 8px;
    height: 8px;
    margin: 0 4px 0 3px;
}

.close-btn {
    display: flex;
    align-items: center;
    height: 14px;
    border: 1px solid;
    border-color: #fff #000 #000 #fff;
}

.nav-btn {
    height: 23px;
    padding-right: 20px;
    border: solid;
    border-width: 1px 2px 2px 0;
    border-color: #fff #8f8c7d #aca899 #fff;
    background: #ece9d8;
}

.nav-btn.low {
    height: 22px;
    border-width: 1px 1px 1px 0;
}

.nav-tools {
    display: flex;
    align-items: center;
    height: 26px;
    background: linear-gradient(#fbfaf7, #ebe8d9);
}

.tree {
    flex: 1;
    margin: 0;
    padding: 0;
    border: 1px solid #7b9ebd;
    border-left: none;
    background: #fff;
    list-style: none;
}

.node {
    display: flex;
    align-items: center;
    height: 16px;
}

.stub {
    width: 6px;
    border-top: 1px dotted #999;
}

.node-text {
    padding: 0 4px;
}

.child .node-text {
    margin-left: 1px;
    padding: 0 3px;
}

.active .node-text {
    background: #ece9d8;
}

.branch {
    width: 11px;
    height: 16px;
    margin-left: 14px;
    flex: none;
}

.branch::before,
.branch::after {
    content: "";
    display: block;
    height: 8px;
    border-left: 1px dotted #999;
}

.branch::before {
    border-bottom: 1px dotted #999;
}

.last .branch::after,
.sub .branch::after {
    display: none;
}

.new {
    margin-left: 1px;
    padding-bottom: 5px;
    font-family: "DejaVu Sans", sans-serif;
    font-size: 9px;
    text-shadow: 1px 0 #fd0, -1px 0 #fd0, 0 1px #fd0, 0 -1px #fd0;
}

/* component list */
.middle {
    display: flex;
    flex-direction: column;
    width: 337px;
    padding: 0 1px 1px 0;
    flex: none;
}

.list-bar {
    height: 26px;
    padding-left: 2px;
    flex: none;
}

.search {
    display: flex;
    height: 26px;
    padding: 1px 0 0 1px;
}

.search input {
    flex: 1;
    padding: 0 2px 3px;
    border: 1px solid #7b9ebd;
    background: #fff;
}

.search input::placeholder {
    color: #808080;
}

.search button {
    display: flex;
    align-items: center;
    padding: 0 4px;
}

.parts {
    height: 121px;
    padding: 1px 0 0 12px;
    margin-left: 1px;
    flex: none;
    border: 1px solid #7b9ebd;
    background: #fff;
}

.part {
    display: flex;
    align-items: center;
    gap: 4px;
    height: 16px;
}

.minus {
    width: 9px;
    height: 9px;
    margin: 0 1px 0 -3px;
}

.part.sub {
    padding-left: 4px;
}

.sub .branch {
    margin: 0 -2px 0 14px;
}

.gear {
    width: 14px;
}

.picked {
    padding: 0 4px 0 2px;
    background: #316ac5;
}

.blue {
    margin-top: 6px;
    border-color: #0055e5;
    background: #0055e5;
    color: #fff;
}

.props {
    flex: 1;
    margin-left: 1px;
    padding-right: 1px;
    border: 1px solid #7b9ebd;
    background: #fff;
}

table {
    width: 100%;
    table-layout: fixed;
    border-collapse: separate;
    border-spacing: 0;
}

th,
td {
    height: 19px;
    padding: 0;
    border: solid #c0c0c0;
    border-width: 0 1px 1px 0;
    font-weight: normal;
    line-height: 16px;
}

thead th {
    height: 25px;
    background: linear-gradient(#fff, #ece9d8);
}

.c-no {
    width: 22px;
}

.c-name {
    width: 121px;
}

.c-add {
    width: 31px;
}

thead .hot {
    background: linear-gradient(#f9d79b, #f0bd5c);
    color: #500050;
}

.no {
    background: linear-gradient(to right, #fff, #ece9d8);
    font-family: "DejaVu Sans Mono", monospace;
    font-size: 10px;
}

.current .no {
    background: #fbd08a;
    color: #500050;
}

.name {
    padding-left: 2px;
}

.label {
    display: inline-block;
    margin-left: 18px;
}

.plus + .label {
    margin-left: 5px;
}

.plus {
    display: inline-block;
    width: 13px;
    height: 13px;
    border: 1px solid #aca899;
    vertical-align: -3px;
    background:
        linear-gradient(#000, #000) center / 7px 1px no-repeat,
        linear-gradient(#000, #000) center / 1px 7px no-repeat,
        #f4f3ee;
}

.link {
    color: #00f;
}

.grey {
    color: #808080;
}

.current .name {
    background: #316ac5;
    color: #fff;
}

.current .value {
    background: #dfe9f5;
}

.value {
    padding-left: 2px;
}

.rebar {
    width: 10px;
    height: 10px;
    margin: 0 1px 0 2px;
    fill: none;
    stroke: #000;
    vertical-align: -1px;
}

.add {
    text-align: center;
    line-height: 0;
}

.add input {
    width: 13px;
    height: 13px;
    appearance: none;
    border: 1px solid #1c5180;
    background: linear-gradient(135deg, #dcdcd7, #fff);
}

.tabs {
    display: flex;
    align-items: flex-end;
    height: 21px;
    margin-top: 3px;
    padding-left: 3px;
    flex: none;
}

.tab {
    width: 46px;
    height: 18px;
    padding-right: 11px;
    border: 1px solid #919b9c;
    border-bottom: none;
    border-radius: 3px 3px 0 0;
    background: linear-gradient(#fff, #ece9d8);
}

.tab.on {
    width: 52px;
    height: 21px;
    padding: 0 13px 2px 0;
    border-top: 2px solid #ffb42c;
    background: #fcfbfa;
}

.tab-panel {
    height: 305px;
    margin: 0 2px 3px 1px;
    padding: 1px 1px 3px 3px;
    flex: none;
    border: 1px solid #919b9c;
    background: #ece9d8;
}

.rebar-bar {
    height: 22px;
    margin-bottom: 1px;
}

.more {
    margin-left: auto;
    padding-right: 5px;
    font-family: "DejaVu Sans", sans-serif;
    font-size: 14px;
}

.rebar-info {
    width: 200px;
    height: 23px;
    margin-bottom: 3px;
    color: #aca899;
}

.rebar-info label {
    padding: 0 3px 0 5px;
}

.combo.off {
    width: 133px;
    height: 19px;
    border: 1px solid #aca899;
}

.off select {
    background: #f4f2ea;
}

.combo.off::after {
    border-top-color: #aca899;
}

.preview {
    display: flex;
    height: 252px;
    border: 2px solid #f00;
    background: #000;
    overflow: hidden;
}

.preview svg {
    flex: none;
}

.dash {
    stroke: #3c3c3c;
    stroke-dasharray: 7 3;
}

.axis {
    stroke: #707070;
    stroke-dasharray: 9 3 2 3;
}

.scale {
    fill: #444;
    font: 11px "DejaVu Sans", sans-serif;
    text-anchor: middle;
}

.cover {
    fill: none;
    stroke: #0f0;
}

.outline {
    fill: none;
    stroke: #fff;
}

.tiny {
    font: 4px "DejaVu Sans", "Noto Sans CJK SC", sans-serif;
    text-anchor: middle;
}

.status,
.dialog-status {
    display: flex;
    gap: 2px;
}

.cell {
    height: 21px;
    padding: 1px;
    border: 1px solid;
    border-color: #c5c2b2 #fff #fff #c5c2b2;
    background: linear-gradient(#fbfaf7, #ece9d8);
    line-height: 18px;
}

.coord {
    width: 149px;
    padding-left: 10px;
}

.rest {
    flex: 1;
}

/* drawing side */
.work {
    display: flex;
    flex-direction: column;
    gap: 1px;
    min-width: 0;
    flex: 1;
}

.split {
    display: flex;
    gap: 4px;
}

.fit {
    flex: none;
}

.tail {
    width: 34px;
    margin-left: auto;
}

.grow {
    flex: 1;
    min-width: 0;
}

.canvas {
    position: relative;
    flex: 1;
    min-height: 809px;
    overflow: hidden;
    margin-top: -1px;
    background: #000;
}

.plan {
    display: block;
    overflow: visible;
}

.bubble {
    fill: none;
    stroke: #008000;
}

.bubble text {
    fill: #909090;
    stroke: none;
    font: 12px "DejaVu Sans Mono", monospace;
    text-anchor: middle;
}

.snap-row {
    height: 28px;
    gap: 5px;
}

/* floating polygon editor */
.dialog {
    position: absolute;
    top: 169px;
    right: 0;
    bottom: 0;
    left: 238px;
    display: flex;
    flex-direction: column;
    border: solid #0a3ddc;
    border-width: 0 0 4px 4px;
    background: #ece9d8;
    overflow: hidden;
}

.dialog h2 {
    height: 22px;
    margin: 0;
    flex: none;
    background: linear-gradient(#3c8cf4, #0553dd 20%, #0560f0 70%, #0450d8);
    color: #fff;
    font-size: 13px;
    font-weight: bold;
    line-height: 24px;
}

.dialog .bar {
    height: 26px;
    flex: none;
}

.dialog .offset-bar {
    height: 25px;
}

.radios {
    display: flex;
    align-items: center;
    height: 24px;
    padding: 0 10px 0 1px;
    background: #ece9d8;
}

.radios label {
    display: flex;
    align-items: center;
    gap: 8px;
    padding-right: 10px;
}

.radios label:last-child {
    padding-right: 0;
}

.radios input {
    width: 11px;
    height: 11px;
    appearance: none;
    border: 1px solid #9a978a;
    border-radius: 50%;
}

.radios input:checked {
    border-color: #555;
    background: radial-gradient(#000 0 2px, #fff 3px);
}

.num {
    display: flex;
    width: 78px;
    height: 19px;
    margin-left: 8px;
    flex: none;
    border: 1px solid #aca899;
    color: #aca899;
}

.num input {
    width: 59px;
    text-align: right;
    font-family: "DejaVu Sans Mono", monospace;
    font-size: 10px;
}

.spin {
    display: flex;
    flex-direction: column;
    justify-content: space-around;
    align-items: center;
    width: 18px;
}

.spin::before,
.spin::after {
    content: "";
    border: 3px solid transparent;
}

.spin::before {
    border-width: 0 3px 3px;
    border-bottom-color: currentColor;
}

.spin::after {
    border-width: 3px 3px 0;
    border-top-color: currentColor;
}

.num.plain {
    width: 57px;
    margin: 0 1px 0 2px;
    border: none;
    background: #fff;
    color: #000;
}

.plain input {
    width: 39px;
}

.plain .spin {
    width: 13px;
    margin-left: 5px;
    background: #f4f2ea;
}

.unit {
    padding: 0 14px 0 6px;
}

.oy {
    padding-left: 8px;
}

.poly {
    flex: 1;
    background: #000;
    overflow: hidden;
}

.steps {
    fill: #c0c0c0;
    font: 11px "DejaVu Sans Mono", monospace;
}

.shape {
    fill: none;
    stroke: #f00;
    stroke-width: 3;
}

.dims {
    fill: #0f0;
    font: bold 15px "DejaVu Sans Mono", monospace;
    text-anchor: middle;
}

.dyn {
    height: 23px;
    padding-top: 1px;
    border-bottom: 1px solid #aca899;
    flex: none;
}

.dyn button {
    height: 20px;
    padding: 0 6px;
    background: #f8f7f2;
}

.blank {
    height: 41px;
    border: solid #fff;
    border-width: 1px 0;
    flex: none;
}

.dialog-status .cell {
    width: 148px;
    flex: none;
}

.dialog-status .cell:last-child {
    flex: 1;
}

.pos {
    padding-left: 8px;
}

.bottom-strip {
    display: flex;
    gap: 2px;
    height: 4px;
    padding-top: 1px;
}

.bottom-strip span {
    flex: 1;
    border: 1px solid #c5c2b2;
    border-bottom: none;
    background: #fbfaf7;
}

.bottom-strip span:nth-child(1) {
    flex: 0 0 128px;
}

.bottom-strip span:nth-child(2) {
    flex: 0 0 78px;
}

.bottom-strip span:nth-child(3) {
    flex: 0 0 98px;
}

.bottom-strip span:nth-child(4) {
    flex: 0 0 48px;
}
</style>
